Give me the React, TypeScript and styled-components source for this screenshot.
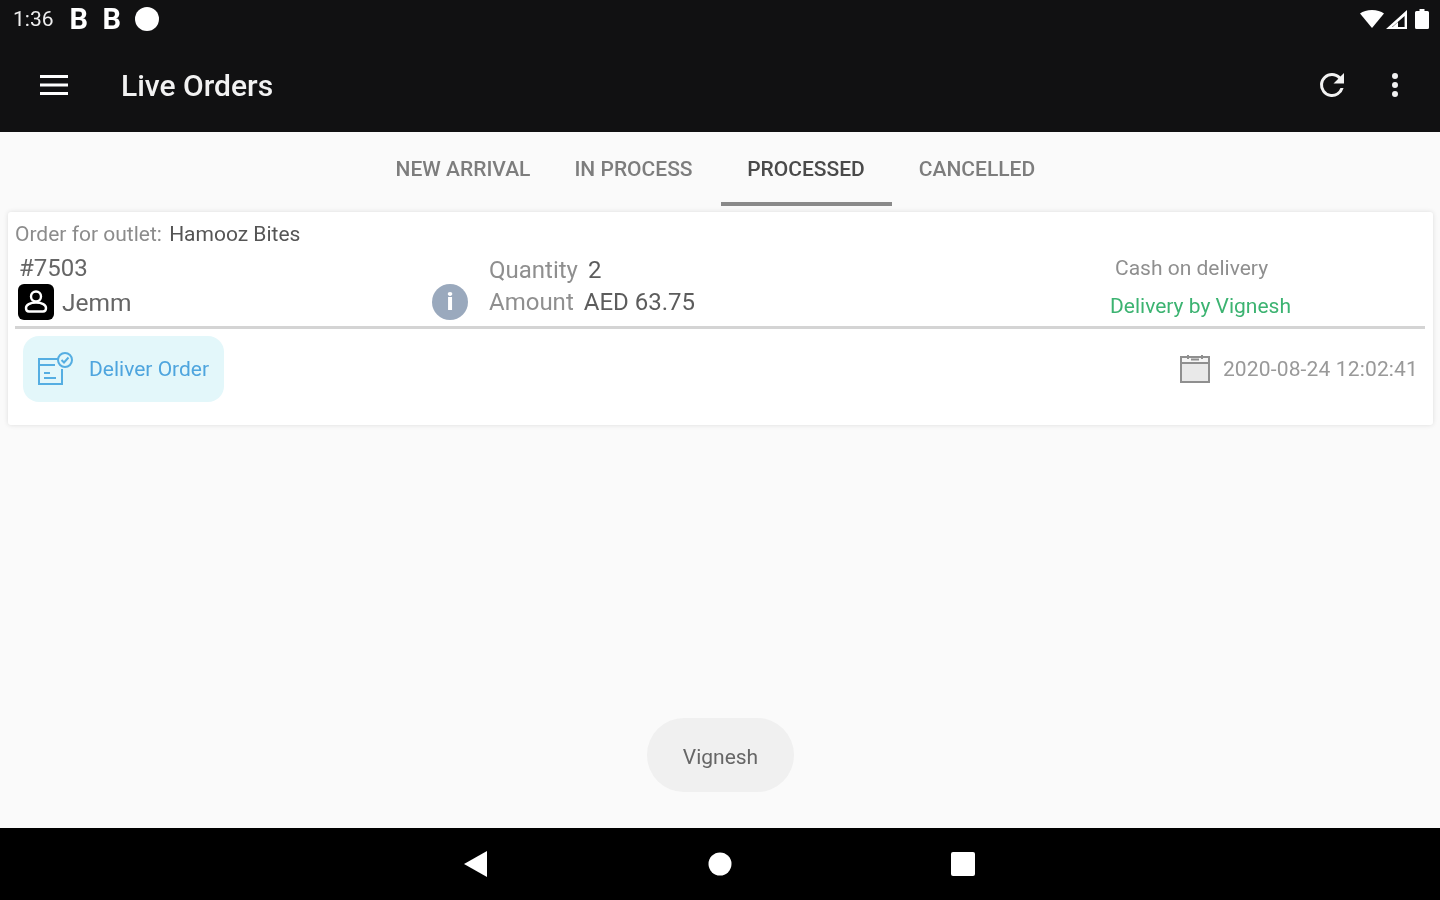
import * as React from 'react';
import styled, { createGlobalStyle } from 'styled-components';

const tabs = [
  { label: 'NEW ARRIVAL', width: 167 },
  { label: 'IN PROCESS', width: 174 },
  { label: 'PROCESSED', width: 171, active: true },
  { label: 'CANCELLED', width: 171 },
];

const App: React.FC = () => {
  return (
    <Screen>
      <GlobalStyle />
      <StatusBar>
        <StatusLeft>
          <Clock>1:36</Clock>
          <NotifyLetter>B</NotifyLetter>
          <NotifyLetter>B</NotifyLetter>
          <NotifyDot />
        </StatusLeft>
        <StatusRight>
          <svg width="24" height="18" viewBox="0 0 24 18">
            <path d="M0 3.500C3 1.200 7.200 0 12 0s9 1.200 12 3.500L12 18z" fill="#fff" />
          </svg>
          <svg width="21" height="19" viewBox="0 0 21 19">
            <path d="M21 0v19H0zM18.600 6 6 17h12.600z" fill="#fff" fillRule="evenodd" />
            <path d="M12 12v5H6.500z" fill="#fff" />
          </svg>
          <BatteryIcon width="14" height="20" viewBox="0 0 14 20">
            <path d="M4.500 0h5v2H12.500a1.500 1.500 0 0 1 1.500 1.500V18.500a1.500 1.500 0 0 1-1.500 1.500h-11A1.500 1.500 0 0 1 0 18.500V3.500A1.500 1.500 0 0 1 1.500 2h3z" fill="#fff" />
          </BatteryIcon>
        </StatusRight>
      </StatusBar>

      <Toolbar>
        <ToolbarLeft>
          <svg width="30" height="24" viewBox="0 0 30 24">
            <path d="M1 3.500h28M1 12h28M1 20.500h28" stroke="#fff" strokeWidth="3" />
          </svg>
          <Title>Live Orders</Title>
        </ToolbarLeft>
        <ToolbarRight>
          <svg width="36" height="36" viewBox="0 0 24 24">
            <path d="M17.650 6.350A7.960 7.960 0 0 0 12 4a8 8 0 1 0 7.730 10h-2.080A6 6 0 1 1 12 6c1.660 0 3.140.69 4.220 1.780L13 11h7V4z" fill="#f2f2f2" />
          </svg>
          <svg width="36" height="36" viewBox="0 0 24 24">
            <path d="M12 8a2 2 0 1 0 0-4 2 2 0 0 0 0 4m0 2a2 2 0 1 0 0 4 2 2 0 0 0 0-4m0 6a2 2 0 1 0 0 4 2 2 0 0 0 0-4" fill="#f2f2f2" />
          </svg>
        </ToolbarRight>
      </Toolbar>

      <Content>
        <TabBar>
          {tabs.map(tab => (
            <Tab key={tab.label} $width={tab.width} $active={!!tab.active}>{tab.label}</Tab>
          ))}
        </TabBar>

        <Card>
          <OutletLine>
            <Muted>Order for outlet:</Muted> <Dark>Hamooz Bites</Dark>
          </OutletLine>

          <InfoRow>
            <CustomerColumn>
              <OrderNumber>#7503</OrderNumber>
              <Customer>
                <AvatarBox>
                  <svg width="30" height="30" viewBox="0 0 30 30" fill="none" stroke="#fff" strokeWidth="2.400">
                    <circle cx="15" cy="9.500" r="5" />
                    <path d="M15 15.500c-6 0-10 2.500-10 5.500 0 2 1.200 3.500 3 3.500h14c1.800 0 3-1.500 3-3.500 0-3-4-5.500-10-5.500z" />
                  </svg>
                </AvatarBox>
                <CustomerName>Jemm</CustomerName>
              </Customer>
            </CustomerColumn>

            <InfoIcon>i</InfoIcon>

            <AmountColumn>
              <AmountLine><Label>Quantity</Label><Value>2</Value></AmountLine>
              <AmountLine><Label>Amount</Label><Value>AED 63.75</Value></AmountLine>
            </AmountColumn>

            <PaymentColumn>
              <Payment>Cash on delivery</Payment>
              <DeliveryBy>Delivery by Vignesh</DeliveryBy>
            </PaymentColumn>
          </InfoRow>

          <FooterRow>
            <DeliverButton>
              <svg width="38" height="34" viewBox="0 0 38 34" fill="none" stroke="#55aee2" strokeWidth="2">
                <path d="M22 7H2v25h23V17" />
                <path d="M2 13h16" />
                <path d="M7 21h6M7 26h12" />
                <circle cx="28" cy="8" r="7" />
                <path d="M24.500 8l2.500 2.500 4.500-5" />
              </svg>
              <DeliverLabel>Deliver Order</DeliverLabel>
            </DeliverButton>
            <DateBlock>
              <svg width="30" height="28" viewBox="0 0 30 28">
                <rect x="1" y="2" width="28" height="25" fill="#e9e9e9" stroke="#8f8f8f" strokeWidth="2" />
                <rect x="1" y="2" width="28" height="6" fill="#f5f5f5" stroke="#8f8f8f" strokeWidth="2" />
                <path d="M8 0v4M22 0v4M11 4.500h8" stroke="#8f8f8f" strokeWidth="2" />
              </svg>
              <DateText>2020-08-24 12:02:41</DateText>
            </DateBlock>
          </FooterRow>
        </Card>

        <Toast>Vignesh</Toast>
      </Content>

      <NavBar>
        <svg width="24" height="26" viewBox="0 0 24 26">
          <path d="M23 0v26L0 13z" fill="#fff" />
        </svg>
        <HomeIcon width="24" height="24" viewBox="0 0 24 24">
          <circle cx="12" cy="12" r="11.500" fill="#fff" />
        </HomeIcon>
        <svg width="26" height="26" viewBox="0 0 26 26">
          <rect x="1" y="1" width="24" height="24" rx="2" fill="#fff" />
        </svg>
      </NavBar>
    </Screen>
  );
};

export default App;

const GlobalStyle = createGlobalStyle`
  html, body {
    margin: 0;
    padding: 0;
    background: #fafafa;
  }

  * {
    box-sizing: border-box;
  }
`;

const Screen = styled.div`
  width: 1440px;
  height: 900px;
  display: flex;
  flex-direction: column;
  overflow: hidden;
  font-family: Roboto, "Liberation Sans", sans-serif;
  filter: blur(0.7px);
`;

const StatusBar = styled.div`
  height: 38px;
  flex: none;
  display: flex;
  justify-content: space-between;
  align-items: center;
  padding: 0 11px 0 13px;
  background: #111112;
  color: #fff;
`;

const StatusLeft = styled.div`
  display: flex;
  align-items: center;
`;

const StatusRight = styled.div`
  display: flex;
  align-items: center;
  gap: 2px;
`;

const BatteryIcon = styled.svg`
  margin-left: 6px;
`;

const Clock = styled.span`
  font-size: 21px;
  color: #eee;
  margin-right: 16px;
`;

const NotifyLetter = styled.span`
  font-size: 29px;
  line-height: 30px;
  font-weight: 700;
  width: 33px;
`;

const NotifyDot = styled.span`
  width: 24px;
  height: 24px;
  border-radius: 50%;
  background: #fff;
  margin-left: -1px;
`;

const Toolbar = styled.div`
  height: 94px;
  flex: none;
  display: flex;
  justify-content: space-between;
  align-items: center;
  padding: 0 27px 0 39px;
  background: #111112;
`;

const ToolbarLeft = styled.div`
  display: flex;
  align-items: center;
  gap: 52px;
`;

const ToolbarRight = styled.div`
  display: flex;
  align-items: center;
  gap: 27px;
`;

const Title = styled.h1`
  margin: 0;
  font-size: 30px;
  font-weight: 500;
  color: #f2f2f2;
`;

const Content = styled.main`
  flex: 1;
  position: relative;
  background: #fafafa;
`;

const TabBar = styled.div`
  height: 74px;
  display: flex;
  justify-content: center;
  padding-left: 2px;
`;

const Tab = styled.div<{ $width: number; $active: boolean }>`
  width: ${props => props.$width}px;
  display: flex;
  justify-content: center;
  padding-top: 24px;
  font-size: 21px;
  font-weight: 500;
  line-height: 26px;
  color: ${props => (props.$active ? '#4a4a4a' : '#7d7d7d')};
  border-bottom: 4px solid ${props => (props.$active ? '#8a8a8a' : 'transparent')};
`;

const Card = styled.section`
  margin: 6px 7px 0 8px;
  height: 213px;
  padding: 10px 7px 0 7px;
  background: #fff;
  border-radius: 3px;
  box-shadow: 0 0 5px rgba(0, 0, 0, 0.12);
`;

const OutletLine = styled.div`
  font-size: 21px;
  line-height: 25px;
`;

const Muted = styled.span`
  color: #8c8c8c;
  margin-right: 2px;
`;

const Dark = styled.span`
  color: #555;
`;

const InfoRow = styled.div`
  height: 77px;
  margin-top: 5px;
  display: flex;
  border-bottom: 3px solid #d4d4d4;
  width: 1410px;
`;

const CustomerColumn = styled.div`
  width: 417px;
  padding-left: 4px;
`;

const OrderNumber = styled.div`
  font-size: 24px;
  line-height: 32px;
  color: #666;
`;

const Customer = styled.div`
  display: flex;
  align-items: center;
  gap: 8px;
  margin-left: -1px;
`;

const AvatarBox = styled.div`
  width: 36px;
  height: 36px;
  display: flex;
  align-items: center;
  justify-content: center;
  border-radius: 6px;
  background: #000;
`;

const CustomerName = styled.span`
  font-size: 24.5px;
  color: #666;
`;

const InfoIcon = styled.div`
  width: 36px;
  height: 36px;
  margin-top: 32px;
  flex: none;
  display: flex;
  align-items: center;
  justify-content: center;
  border-radius: 50%;
  background: #9aa9bd;
  color: #fff;
  font-size: 24px;
  font-weight: 900;
`;

const AmountColumn = styled.div`
  width: 642px;
  padding: 2px 0 0 21px;
`;

const AmountLine = styled.div`
  display: flex;
  gap: 10px;
  font-size: 24px;
  line-height: 32px;
`;

const Label = styled.span`
  color: #8f8f8f;
`;

const Value = styled.span`
  color: #5c5c5c;
`;

const PaymentColumn = styled.div`
  flex: 1;
`;

const Payment = styled.div`
  font-size: 21px;
  line-height: 32px;
  padding-left: 5px;
  color: #8f8f8f;
`;

const DeliveryBy = styled.div`
  font-size: 21px;
  line-height: 28px;
  margin-top: 8px;
  color: #3cb371;
`;

const FooterRow = styled.div`
  display: flex;
  justify-content: space-between;
  align-items: center;
  width: 1403px;
  margin-top: 7px;
  padding-left: 8px;
`;

const DeliverButton = styled.button`
  width: 201px;
  height: 66px;
  display: flex;
  align-items: center;
  gap: 14px;
  padding: 0 0 0 14px;
  border: none;
  border-radius: 16px;
  background: #e3f7fa;
  font: inherit;
`;

const DeliverLabel = styled.span`
  font-size: 21px;
  font-weight: 400;
  color: #4ea5de;
`;

const DateBlock = styled.div`
  display: flex;
  align-items: center;
  gap: 13px;
`;

const DateText = styled.span`
  font-size: 21px;
  letter-spacing: 0.15px;
  color: #999;
`;

// floats over the list, like an android toast
const Toast = styled.div`
  position: absolute;
  left: 647px;
  top: 586px;
  width: 147px;
  height: 74px;
  padding-top: 3px;
  display: flex;
  align-items: center;
  justify-content: center;
  border-radius: 37px;
  background: #f0f0f0;
  color: #666;
  font-size: 21px;
`;

const NavBar = styled.nav`
  height: 72px;
  flex: none;
  display: flex;
  justify-content: space-between;
  align-items: center;
  padding: 0 464px;
  background: #000;
`;

const HomeIcon = styled.svg`
  margin-left: 2px;
`;
